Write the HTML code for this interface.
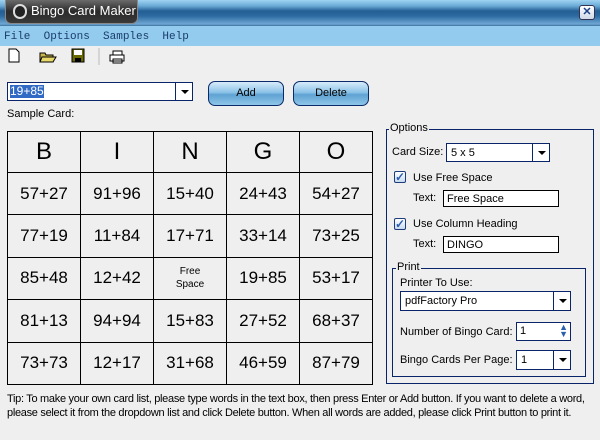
<!DOCTYPE html>
<html><head><style>
*{margin:0;padding:0;box-sizing:border-box}
body{width:600px;height:440px;background:#efefef;font-family:"Liberation Sans",sans-serif;font-size:11px;color:#000;position:relative;overflow:hidden}
.a{position:absolute}
.title{left:0;top:0;width:600px;height:26px;background:linear-gradient(#9fd3f2 0,#6aa9d6 6px,#245f94 11px,#2c6aa0 16px,#6ea7d4 24px,#3b6f9e 26px)}
.tab{left:5px;top:0;width:133px;height:24px;background:linear-gradient(#6b6b6b,#2a2a2a 50%,#3a3a3a);border-radius:0 0 6px 6px;border:1px solid #888;border-top:none;color:#fff;font-size:13px;line-height:22px;padding-left:25px;white-space:nowrap}
.menu{left:0;top:26px;width:600px;height:20px;background:#92cbee;font-family:"Liberation Mono",monospace;font-size:11px;color:#1a3d6a;line-height:22px}
.cb{border:1px solid #0a246a;background:#fff}
.arrow{position:absolute;right:0;top:0;bottom:0;width:17px;border-left:1px solid #0a246a}
.arrow:after{content:"";position:absolute;left:5px;top:7px;border:4px solid transparent;border-top:4px solid #000;border-bottom:0}
.btn{border:1px solid #0a2a6a;border-radius:7px;background:linear-gradient(#d8ecfa,#8cc3e8 45%,#5fa2d2 55%,#8ec6ea);text-align:center;line-height:22px;font-size:11px}
table{border-collapse:collapse;position:absolute;left:7px;top:131px}
td{border:1px solid #000;width:73px;height:42.4px;text-align:center;font-size:17px}
tr:first-child td{height:41px;font-size:24px}
.grp{border:1px solid #0a246a}
.lbl{background:#efefef;padding:0 1px}
.chk{width:12px;height:12px;border:1px solid #1c3d7a;border-radius:2px;background:linear-gradient(#fff,#c8daf0);color:#2a5fae;font-size:12px;line-height:10px;text-align:center;font-weight:bold}
</style></head><body>
<div class="a title"></div>
<div class="a tab"><span class="a" style="left:7px;top:4px;width:14px;height:15px;background:#222;border-radius:7px;border:2px solid #ddd"></span>Bingo Card Maker</div>
<div class="a" style="left:579px;top:5px;width:16px;height:15px;border-radius:3px;background:linear-gradient(#fff,#cfd8e8);border:1px solid #335;color:#1d3f8a;font-size:11px;line-height:13px;text-align:center;font-weight:bold">✕</div>
<div class="a menu"><span style="margin-left:4px">File</span>&nbsp; Options&nbsp; Samples&nbsp; Help</div>
<svg class="a" style="left:6px;top:47px" width="120" height="18">
<path d="M3 2h7l3 3v10H3z" fill="#fff" stroke="#000"/>
<path d="M34 6h5l1 2h7v7H34z" fill="#c8b44a" stroke="#000"/><path d="M36 10h14l-3 5H34z" fill="#e8d86a" stroke="#000"/>
<rect x="66" y="2" width="12" height="13" fill="#6b6a00" stroke="#000"/><rect x="68" y="3" width="8" height="5" fill="#fff"/><rect x="69" y="11" width="6" height="4" fill="#000"/>
<line x1="93" y1="1" x2="93" y2="18" stroke="#bbb"/>
<path d="M107 4h9v4h-9zM104 8h14v6h-14zM107 12h9v4h-9z" fill="#fff" stroke="#000"/>
</svg>
<div class="a cb" style="left:7px;top:82px;width:186px;height:19px"><span style="position:absolute;left:2px;top:2px;background:#316ac5;color:#fff;font-size:12px;line-height:13px">19+85</span><div class="arrow"></div></div>
<div class="a btn" style="left:208px;top:81px;width:76px;height:25px">Add</div>
<div class="a btn" style="left:293px;top:81px;width:76px;height:25px">Delete</div>
<div class="a" style="left:7px;top:108px">Sample Card:</div>
<table>
<tr><td>B</td><td>I</td><td>N</td><td>G</td><td>O</td></tr>
<tr><td>57+27</td><td>91+96</td><td>15+40</td><td>24+43</td><td>54+27</td></tr>
<tr><td>77+19</td><td>11+84</td><td>17+71</td><td>33+14</td><td>73+25</td></tr>
<tr><td>85+48</td><td>12+42</td><td style="font-size:10px;line-height:13px">Free<br>Space</td><td>19+85</td><td>53+17</td></tr>
<tr><td>81+13</td><td>94+94</td><td>15+83</td><td>27+52</td><td>68+37</td></tr>
<tr><td>73+73</td><td>12+17</td><td>31+68</td><td>46+59</td><td>87+79</td></tr>
</table>
<div class="a grp" style="left:386px;top:129px;width:208px;height:255px"></div>
<div class="a lbl" style="left:389px;top:122px">Options</div>
<div class="a" style="left:392px;top:146px">Card Size:</div>
<div class="a cb" style="left:446px;top:143px;width:104px;height:19px;padding:3px 4px">5 x 5<div class="arrow"></div></div>
<div class="a chk" style="left:394px;top:171px">✓</div>
<div class="a" style="left:413px;top:172px">Use Free Space</div>
<div class="a" style="left:413px;top:192px">Text:</div>
<div class="a cb" style="left:443px;top:190px;width:116px;height:17px;padding:2px 3px;border-color:#000">Free Space</div>
<div class="a chk" style="left:394px;top:218px">✓</div>
<div class="a" style="left:413px;top:218px">Use Column Heading</div>
<div class="a" style="left:413px;top:238px">Text:</div>
<div class="a cb" style="left:443px;top:236px;width:116px;height:17px;padding:2px 3px;border-color:#000">DINGO</div>
<div class="a grp" style="left:392px;top:268px;width:194px;height:109px"></div>
<div class="a lbl" style="left:396px;top:261px">Print</div>
<div class="a" style="left:400px;top:277px">Printer To Use:</div>
<div class="a cb" style="left:400px;top:291px;width:171px;height:20px;padding:3px 4px">pdfFactory Pro<div class="arrow"></div></div>
<div class="a" style="left:400px;top:326px">Number of Bingo Card:</div>
<div class="a cb" style="left:516px;top:322px;width:55px;height:19px;padding:2px 3px">1<span style="position:absolute;right:2px;top:1px;color:#2a5fae;font-size:9px;line-height:7px">▲<br>▼</span></div>
<div class="a" style="left:400px;top:354px">Bingo Cards Per Page:</div>
<div class="a cb" style="left:516px;top:350px;width:55px;height:20px;padding:3px 4px">1<div class="arrow"></div></div>
<div class="a" style="left:7px;top:392px;font-size:11px;line-height:14px;letter-spacing:-0.3px">Tip: To make your own card list, please type words in the text box, then press Enter or Add button. If you want to delete a word,<br>please select it from the dropdown list and click Delete button. When all words are added, please click Print button to print it.</div>
</body></html>
